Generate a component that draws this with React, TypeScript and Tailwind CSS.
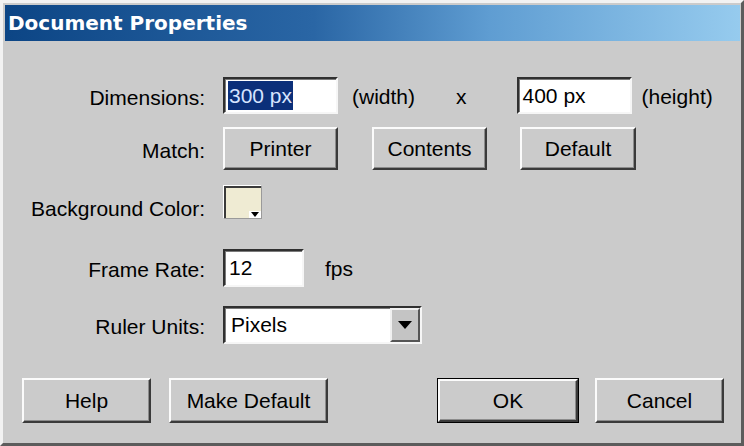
import React from "react";

const font = "font-['Liberation_Sans',Arial,sans-serif]";

const sunken =
  "border-t-2 border-l-2 border-b-2 border-r-2 border-t-[#303030] border-l-[#303030] border-b-[#f6f6f6] border-r-[#f6f6f6] bg-white shadow-[inset_1px_1px_0_#7a7a7a]";

const raised =
  "border-2 border-t-[#fbfbfb] border-l-[#fbfbfb] border-b-[#3a3a3a] border-r-[#3a3a3a] shadow-[inset_-1px_-1px_0_#8c8c8c] bg-[#cbcbcb]";

function Btn({ w, children }: { w: string; children: React.ReactNode }) {
  return (
    <div className={`${raised} ${w} h-full flex items-center justify-center text-[21px] text-black`}>
      {children}
    </div>
  );
}

function Label({ children, align = "items-center" }: { children: React.ReactNode; align?: string }) {
  return (
    <div className={`w-[200px] shrink-0 flex justify-end ${align} h-full text-[21px] text-black leading-none`}>
      <span className="pt-[3px]">{children}</span>
    </div>
  );
}

export default function App() {
  return (
    <div
      className={`${font} w-[744px] h-[446px] bg-[#cbcbcb] flex flex-col pt-[2px] pl-[2px] pr-[1px] border-t-[3px] border-l-[3px] border-t-[#f2f2f2] border-l-[#f2f2f2] border-r-[3px] border-b-[3px] border-r-[#5c5c5c] border-b-[#5c5c5c] overflow-hidden`}
    >
      {/* Title bar */}
      <div className="h-[36px] shrink-0 flex items-center pl-[3px] bg-[linear-gradient(90deg,#0c4585_0%,#2a66a5_42%,#5f9dd2_66%,#96cbee_100%)]">
        <span className="font-['DejaVu_Sans',Verdana,sans-serif] font-bold text-[20px] text-white leading-none">
          Document Properties
        </span>
      </div>

      {/* Dimensions */}
      <div className="mt-[36px] h-[37px] flex items-center shrink-0">
        <Label>Dimensions:</Label>
        <div className={`${sunken} ml-[18px] w-[115px] h-full flex items-center pl-[3px]`}>
          <span className="bg-[#0b2f7a] text-[#d6e4ff] text-[21px] leading-[29px] h-[29px] px-[1px]">300 px</span>
        </div>
        <span className="ml-[14px] text-[21px] text-black pt-[2px]">(width)</span>
        <span className="ml-[41px] text-[21px] text-black pt-[2px]">x</span>
        <div className={`${sunken} ml-[50px] w-[115px] h-full flex items-center pl-[4px] text-[21px] text-black`}>
          400 px
        </div>
        <span className="ml-[10px] text-[21px] text-black pt-[2px]">(height)</span>
      </div>

      {/* Match */}
      <div className="mt-[13px] h-[43px] flex items-center shrink-0">
        <Label>Match:</Label>
        <div className="ml-[18px] h-full flex">
          <Btn w="w-[115px]">Printer</Btn>
          <div className="w-[34px]" />
          <Btn w="w-[115px]">Contents</Btn>
          <div className="w-[33px]" />
          <Btn w="w-[116px]">Default</Btn>
        </div>
      </div>

      {/* Background Color */}
      <div className="mt-[15px] h-[34px] flex items-end shrink-0">
        <Label align="items-end">Background Color:</Label>
        <div className="ml-[18px] w-[39px] h-full border-t border-l border-t-white border-l-white border-b border-r border-b-[#9a9a9a] border-r-[#9a9a9a]">
          <div className="relative w-full h-full bg-[#efebd3] border-t-2 border-l-2 border-t-[#3a3a3a] border-l-[#3a3a3a]">
            <div className="absolute right-0 bottom-0 w-[12px] h-[7px] bg-white flex items-center justify-center">
              <svg width="8" height="5" viewBox="0 0 8 5">
                <polygon points="0,0 8,0 4,5" fill="#000" />
              </svg>
            </div>
          </div>
        </div>
      </div>

      {/* Frame Rate */}
      <div className="mt-[30px] h-[38px] flex items-center shrink-0">
        <Label>Frame Rate:</Label>
        <div className={`${sunken} ml-[18px] w-[81px] h-full flex items-center pl-[4px] text-[21px] text-black`}>
          12
        </div>
        <span className="ml-[21px] text-[21px] text-black pt-[2px]">fps</span>
      </div>

      {/* Ruler Units */}
      <div className="mt-[19px] h-[38px] flex items-center shrink-0">
        <Label>Ruler Units:</Label>
        <div className={`${sunken} ml-[18px] w-[199px] h-full flex items-center text-[21px] text-black`}>
          <span className="flex-1 pl-[6px]">Pixels</span>
          <div className="w-[30px] h-full bg-[#c4c4c4] border-2 border-t-[#f0f0f0] border-l-[#f0f0f0] border-b-[#555] border-r-[#555] flex items-center justify-center">
            <svg width="14" height="8" viewBox="0 0 14 8">
              <polygon points="0,0 14,0 7,8" fill="#000" />
            </svg>
          </div>
        </div>
      </div>

      {/* Bottom buttons */}
      <div className="mt-[34px] h-[45px] flex shrink-0 pl-[17px] pr-[16px]">
        <Btn w="w-[129px]">Help</Btn>
        <div className="w-[18px]" />
        <Btn w="w-[159px]">Make Default</Btn>
        <div className="flex-1" />
        <div className="w-[142px] h-full border border-black">
          <Btn w="w-full">OK</Btn>
        </div>
        <div className="w-[16px]" />
        <Btn w="w-[129px]">Cancel</Btn>
      </div>
    </div>
  );
}
